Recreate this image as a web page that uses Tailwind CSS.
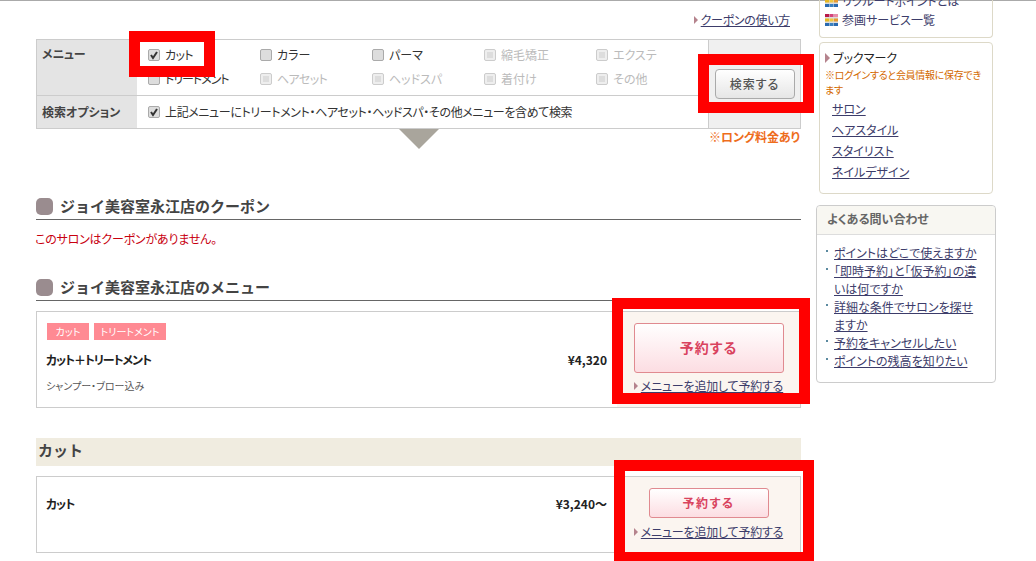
<!DOCTYPE html>
<html lang="ja">
<head>
<meta charset="UTF-8" />
<title>ジョイ美容室永江店</title>
<script src="https://cdn.jsdelivr.net/npm/@tailwindcss/browser@4"></script>
</head>
<body class="relative h-[561px] w-[1036px] overflow-hidden bg-white font-['Noto_Sans_CJK_JP',sans-serif] text-[12px] leading-[18px] text-[#333] [font-feature-settings:'palt']">
  <div class="h-px bg-[#aaa]"></div>
  <div class="flex items-start pl-[36px]">
    <!-- main column -->
    <main class="w-[765px]">
      <div class="flex h-[38px] items-center justify-end pr-[11px] pb-[1px]">
        <span class="mr-[3px] h-0 w-0 border-y-[4px] border-l-[4px] border-y-transparent border-l-[#b5838d]"></span>
        <a class="tracking-[-0.3px] text-[#3c3c6a] underline">クーポンの使い方</a>
      </div>

      <!-- search form -->
      <div class="flex h-[90px] border border-[#ccc]">
        <div class="flex w-[671px] flex-col">
          <div class="flex h-[56px] border-b border-[#ccc]">
            <div class="w-[100px] bg-[#e4e4e4] pl-[5px] pt-[5px] font-bold tracking-[-0.3px] text-[#444]">メニュー</div>
            <div class="grid grid-cols-[112px_112px_112px_112px_112px] grid-rows-[24px_24px] pl-[11px] pt-[3px]">
              <label class="flex items-center gap-[5px]"><span class="flex size-[12px] items-center justify-center rounded-[2px] border border-[#aaa] bg-[#ddd]"><svg viewBox="0 0 10 10" class="size-[10px]"><path d="M2 5l2 3 4-6" fill="none" stroke="#333" stroke-width="2"/></svg></span><span class="tracking-[-0.6px]">カット</span></label>
              <label class="flex items-center gap-[5px]"><span class="size-[12px] rounded-[2px] border border-[#aaa] bg-[#ddd]"></span><span>カラー</span></label>
              <label class="flex items-center gap-[5px]"><span class="size-[12px] rounded-[2px] border border-[#aaa] bg-[#ddd]"></span><span>パーマ</span></label>
              <label class="flex items-center gap-[5px] text-[#bbb]"><span class="flex size-[12px] items-center justify-center rounded-[2px] border border-[#ccc] bg-[#eee]"><span class="size-[6px] bg-[#ddd]"></span></span><span>縮毛矯正</span></label>
              <label class="flex items-center gap-[5px] text-[#bbb]"><span class="flex size-[12px] items-center justify-center rounded-[2px] border border-[#ccc] bg-[#eee]"><span class="size-[6px] bg-[#ddd]"></span></span><span>エクステ</span></label>
              <label class="flex items-center gap-[5px]"><span class="size-[12px] rounded-[2px] border border-[#aaa] bg-[#ddd]"></span><span class="tracking-[-1px]">トリートメント</span></label>
              <label class="flex items-center gap-[5px] text-[#bbb]"><span class="flex size-[12px] items-center justify-center rounded-[2px] border border-[#ccc] bg-[#eee]"><span class="size-[6px] bg-[#ddd]"></span></span><span class="tracking-[-0.6px]">ヘアセット</span></label>
              <label class="flex items-center gap-[5px] text-[#bbb]"><span class="flex size-[12px] items-center justify-center rounded-[2px] border border-[#ccc] bg-[#eee]"><span class="size-[6px] bg-[#ddd]"></span></span><span>ヘッドスパ</span></label>
              <label class="flex items-center gap-[5px] text-[#bbb]"><span class="flex size-[12px] items-center justify-center rounded-[2px] border border-[#ccc] bg-[#eee]"><span class="size-[6px] bg-[#ddd]"></span></span><span>着付け</span></label>
              <label class="flex items-center gap-[5px] text-[#bbb]"><span class="flex size-[12px] items-center justify-center rounded-[2px] border border-[#ccc] bg-[#eee]"><span class="size-[6px] bg-[#ddd]"></span></span><span>その他</span></label>
            </div>
          </div>
          <div class="flex flex-1">
            <div class="flex w-[100px] items-center bg-[#e4e4e4] pl-[5px] font-bold text-[#444]">検索オプション</div>
            <label class="flex items-center gap-[5px] pl-[11px]"><span class="flex size-[12px] items-center justify-center rounded-[2px] border border-[#aaa] bg-[#ddd]"><svg viewBox="0 0 10 10" class="size-[10px]"><path d="M2 5l2 3 4-6" fill="none" stroke="#333" stroke-width="2"/></svg></span><span class="tracking-[-0.37px]">上記メニューにトリートメント・ヘアセット・ヘッドスパ・その他メニューを含めて検索</span></label>
          </div>
        </div>
        <div class="flex flex-1 items-center justify-center border-l border-[#ccc] bg-[#f0f0f0]">
          <button class="h-[30px] w-[80px] rounded-[4px] border border-[#aaa] bg-gradient-to-b from-white to-[#e6e6e6] text-[12px] font-medium tracking-[1px] text-[#555]">検索する</button>
        </div>
      </div>

      <div class="flex h-[36px] items-start">
        <svg viewBox="0 0 40 20" class="ml-[363px] h-[20px] w-[40px]"><polygon points="0,0 40,0 20,20" fill="#a9a59c"/></svg>
        <span class="ml-auto mt-[-1px] pr-[1px] font-bold tracking-[-0.1px] text-[#ee6d1c]">※ロング料金あり</span>
      </div>

      <!-- coupon -->
      <h2 class="mt-[28px] flex h-[27px] items-center gap-[7px] border-b border-[#666] text-[15px] font-bold text-[#444] [font-feature-settings:normal]">
        <span class="size-[17px] rounded-[5px] bg-[#9a8c8f]"></span>ジョイ美容室永江店のクーポン
      </h2>
      <p class="ml-[-1px] mt-[10px] h-[18px] tracking-[-0.2px] text-[#c8000f]">このサロンはクーポンがありません。</p>

      <h2 class="mt-[26px] flex h-[27px] items-center gap-[7px] border-b border-[#666] text-[15px] font-bold text-[#444] [font-feature-settings:normal]">
        <span class="size-[17px] rounded-[5px] bg-[#9a8c8f]"></span>ジョイ美容室永江店のメニュー
      </h2>

      <!-- card 1 -->
      <div class="mt-[10px] flex h-[97px] border border-[#ccc]">
        <div class="flex-1 pl-[9px] pr-[10px] pt-[11px]">
          <div class="ml-[1px] flex gap-[5px] text-[10px] leading-[17px] text-white">
            <span class="w-[42px] bg-[#ff8a93] text-center">カット</span>
            <span class="w-[72px] bg-[#ff8a93] text-center">トリートメント</span>
          </div>
          <div class="mt-[11px] flex font-bold text-[#222]">
            <span class="tracking-[-1.1px]">カット＋トリートメント</span>
            <span class="ml-auto">¥4,320</span>
          </div>
          <p class="mt-[8px] text-[10px] text-[#555]">シャンプー・ブロー込み</p>
        </div>
        <div class="flex w-[183px] flex-col items-center bg-[#fbf5f0] pt-[11px]">
          <button class="h-[50px] w-[150px] rounded-[3px] border border-[#e08a90] bg-gradient-to-b from-white to-[#fcdde2] pb-[2px] text-[14px] font-bold tracking-[1px] text-[#d9435e]">予約する</button>
          <div class="mt-[4px] flex items-center"><span class="mr-[3px] h-0 w-0 border-y-[4px] border-l-[4px] border-y-transparent border-l-[#b5838d]"></span><a class="tracking-[-0.2px] text-[#3c3c6a] underline">メニューを追加して予約する</a></div>
        </div>
      </div>

      <!-- category -->
      <div class="mt-[30px] h-[28px] bg-[#f0ece0] pl-[2px] text-[15px] font-bold leading-[24px] text-[#444] [font-feature-settings:normal]">カット</div>

      <!-- card 2 -->
      <div class="mt-[10px] flex h-[77px] border border-[#ccc]">
        <div class="flex flex-1 pl-[9px] pr-[10px] pt-[18px] font-bold text-[#222]">
          <span class="tracking-[-1px]">カット</span>
          <span class="ml-auto">¥3,240〜</span>
        </div>
        <div class="flex w-[183px] flex-col items-center bg-[#fbf5f0] pt-[11px]">
          <button class="h-[30px] w-[120px] rounded-[3px] border border-[#e08a90] bg-gradient-to-b from-white to-[#fcdde2] text-[12px] font-bold tracking-[1.5px] text-[#d9435e]">予約する</button>
          <div class="mt-[5px] flex items-center"><span class="mr-[3px] h-0 w-0 border-y-[4px] border-l-[4px] border-y-transparent border-l-[#b5838d]"></span><a class="tracking-[-0.2px] text-[#3c3c6a] underline">メニューを追加して予約する</a></div>
        </div>
      </div>
    </main>

    <!-- sidebar -->
    <aside class="ml-[15px] w-[180px]">
      <div class="mx-[3px] mt-[-9px] h-[46px] rounded-b-[4px] border border-t-0 border-[#ddd9c8] pl-[5px] text-[#3c3c6a]">
        <div class="flex h-[18px] items-center gap-[4px]"><svg viewBox="0 0 13 12" class="h-[12px] w-[13px]"><rect width="13" height="12" fill="#ddd"/><rect width="4" height="3" fill="#b8194a"/><rect x="4.500" width="4" height="3" fill="#d6457a"/><rect x="9" width="4" height="3" fill="#e88ca8"/><rect y="4.500" width="4" height="3" fill="#e8b820"/><rect x="4.500" y="4.500" width="4" height="3" fill="#f0c840"/><rect x="9" y="4.500" width="4" height="3" fill="#e89a30"/><rect y="9" width="4" height="3" fill="#2a6ab0"/><rect x="4.500" y="9" width="4" height="3" fill="#3a80c0"/><rect x="9" y="9" width="4" height="3" fill="#2a6ab0"/></svg><span>リクルートポイントとは</span></div>
        <div class="mt-[1px] flex h-[18px] items-center gap-[4px]"><svg viewBox="0 0 13 12" class="h-[12px] w-[13px]"><rect width="13" height="12" fill="#ddd"/><rect width="4" height="3" fill="#b8194a"/><rect x="4.500" width="4" height="3" fill="#d6457a"/><rect x="9" width="4" height="3" fill="#e88ca8"/><rect y="4.500" width="4" height="3" fill="#e8b820"/><rect x="4.500" y="4.500" width="4" height="3" fill="#f0c840"/><rect x="9" y="4.500" width="4" height="3" fill="#e89a30"/><rect y="9" width="4" height="3" fill="#2a6ab0"/><rect x="4.500" y="9" width="4" height="3" fill="#3a80c0"/><rect x="9" y="9" width="4" height="3" fill="#2a6ab0"/></svg><span>参画サービス一覧</span></div>
      </div>
      <div class="mx-[3px] mt-[4px] h-[152px] rounded-[4px] border border-[#ddd9c8] pl-[5px] pt-[6px]">
        <div class="flex h-[18px] items-center text-[#222]"><span class="mr-[3px] h-0 w-0 border-y-[5px] border-l-[5px] border-y-transparent border-l-[#b5838d]"></span><span>ブックマーク</span></div>
        <p class="w-[162px] text-[10px] leading-[15px] tracking-[-0.3px] text-[#d46a00]">※ログインすると会員情報に保存できます</p>
        <ul class="mt-[1px] pl-[7px] leading-[21px] text-[#3c3c6a] underline">
          <li>サロン</li>
          <li>ヘアスタイル</li>
          <li>スタイリスト</li>
          <li>ネイルデザイン</li>
        </ul>
      </div>
      <div class="mt-[11px] h-[178px] rounded-[4px] border border-[#ccc]">
        <div class="h-[29px] rounded-t-[4px] border-b border-[#ddd] bg-[#f8f7f2] pl-[10px] font-bold leading-[26px] text-[#666]">よくある問い合わせ</div>
        <ul class="pl-[17px] pr-[16px] pt-[9px] text-[#3c3c6a]">
          <li class="relative underline"><span class="absolute left-[-8px] top-[6px] size-[2px] bg-[#5b8aa0]"></span>ポイントはどこで使えますか</li>
          <li class="relative underline"><span class="absolute left-[-8px] top-[6px] size-[2px] bg-[#5b8aa0]"></span>「即時予約」と「仮予約」の違いは何ですか</li>
          <li class="relative underline"><span class="absolute left-[-8px] top-[6px] size-[2px] bg-[#5b8aa0]"></span>詳細な条件でサロンを探せますか</li>
          <li class="relative underline"><span class="absolute left-[-8px] top-[6px] size-[2px] bg-[#5b8aa0]"></span>予約をキャンセルしたい</li>
          <li class="relative underline"><span class="absolute left-[-8px] top-[6px] size-[2px] bg-[#5b8aa0]"></span>ポイントの残高を知りたい</li>
        </ul>
      </div>
    </aside>
  </div>

  <!-- red annotation frames drawn over the page -->
  <div class="absolute left-[129px] top-[31px] h-[46px] w-[86px] border-[11px] border-[#f00]"></div>
  <div class="absolute left-[698px] top-[54px] h-[59px] w-[116px] border-[11px] border-[#f00]"></div>
  <div class="absolute left-[612px] top-[298px] h-[106px] w-[198px] border-[11px] border-[#f00]"></div>
  <div class="absolute left-[614px] top-[460px] h-[101px] w-[200px] border-[11px] border-b-[9px] border-[#f00]"></div>
</body>
</html>
